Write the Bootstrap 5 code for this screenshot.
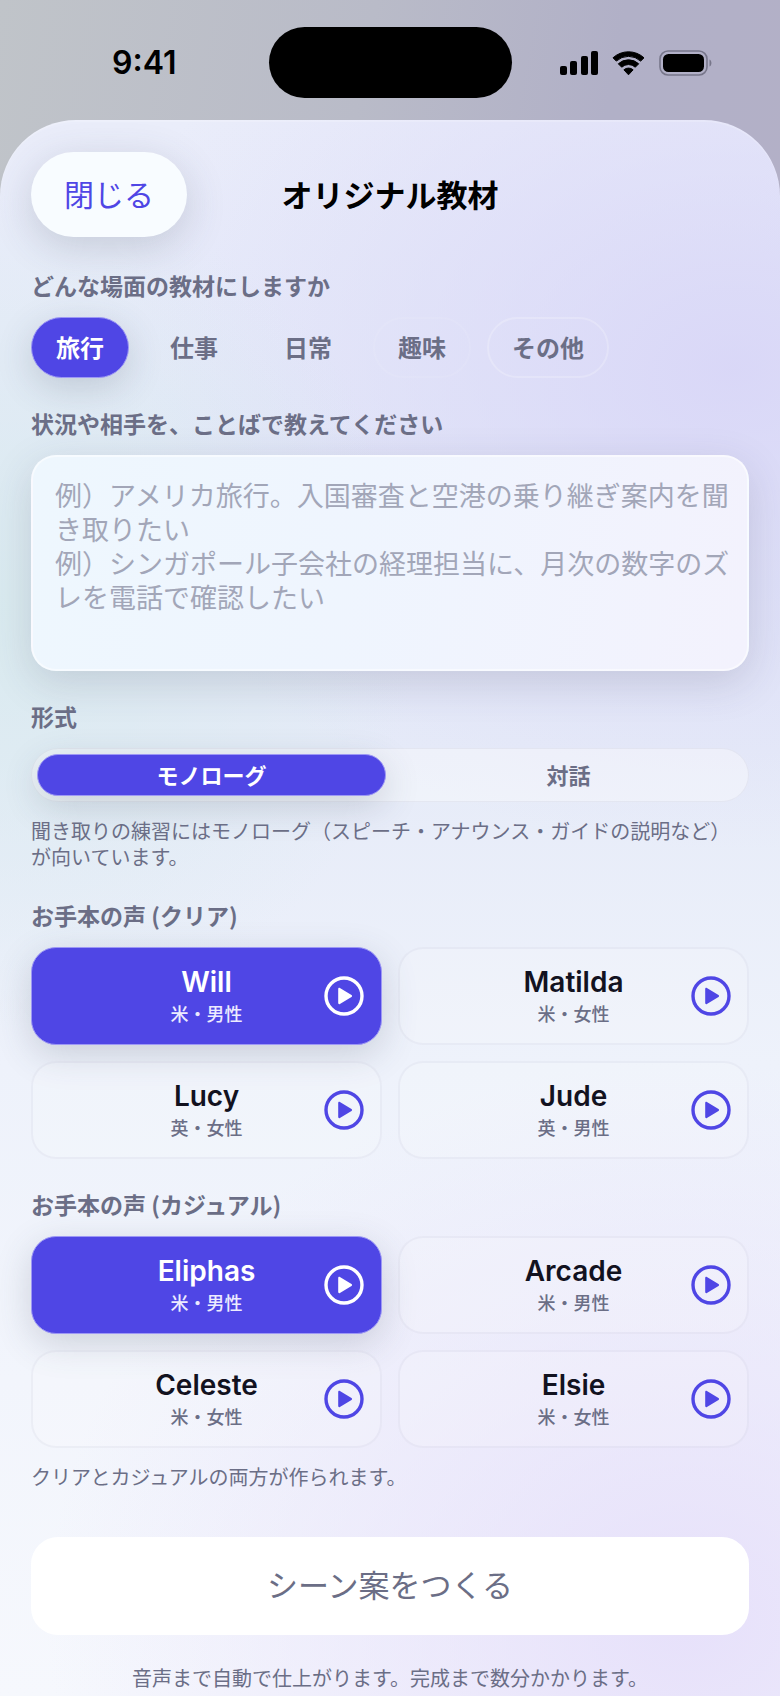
<!DOCTYPE html>
<html lang="ja">
<head>
<meta charset="utf-8">
<meta name="viewport" content="width=device-width, initial-scale=1">
<title>オリジナル教材</title>
<link href="https://cdn.jsdelivr.net/npm/bootstrap@5.3.0/dist/css/bootstrap.min.css" rel="stylesheet">
<style>
  :root { --accent: #4f46e5; --muted: #6b6e86; --ink: #12121f; }
  body {
    font-family: "Noto Sans CJK JP", sans-serif;
    color: var(--muted);
    background: linear-gradient(100deg, #c0c4c9 0%, #b9bbc8 45%, #b1b0c7 75%, #b3b0c7 100%) no-repeat #fff;
    background-size: 100% 320px;
  }
  .latin { font-family: Inter, "Liberation Sans", sans-serif; font-weight: 600; }
  .status-bar {
    display: grid; grid-template-columns: 1fr 243px 1fr;
    align-items: center; justify-items: center;
    padding: 27px 20px 22px; color: #000;
  }
  .clock { font-size: 32px; line-height: 36px; }
  .island { width: 100%; height: 71px; background: #000; border-radius: 36px; }
  .sheet {
    min-height: calc(100vh - 120px);
    padding: 32px 31px 5px;
    border-radius: 76px 76px 0 0;
    box-shadow: inset 0 2px 1px rgba(255,255,255,.2);
    background:
      radial-gradient(ellipse 420px 420px at 0 490px, rgba(216,235,238,.85), rgba(216,235,238,0)),
      radial-gradient(ellipse 640px 480px at 94% 250px, rgba(215,212,247,.85), rgba(215,212,247,0)),
      radial-gradient(ellipse 640px 560px at 88% 1500px, rgba(229,222,250,.9), rgba(229,222,250,0)),
      linear-gradient(180deg, #eaedfa 0%, #e3e9f8 30%, #e6ebf8 40%, #eef2fb 60%, #f6f8fd 100%);
  }
  .sheet-head { display: grid; grid-template-columns: 1fr auto 1fr; align-items: center; }
  .close-btn {
    width: 156px; height: 85px; padding: 0 0 4px; border: 0; border-radius: 43px;
    background: #f8fcff; color: var(--accent);
    font-size: 30px; line-height: 40px;
    box-shadow: 0 10px 40px rgba(60,70,90,.2);
  }
  .sheet-title { padding-bottom: 2px; font-size: 31px; line-height: 40px; font-weight: 600; color: #000; }
  .block { margin: 29px 0 0; padding: 0; border: 0; min-width: 0; }
  .block-label { display: block; float: none; width: auto; margin: 0 0 16px; padding: 0; font-size: 23px; line-height: 32px; font-weight: 600; color: var(--muted); }
  .head-gap { margin-top: 32px; }
  .chip {
    height: 61px; padding: 0 24px; border: 1px solid transparent; border-radius: 31px;
    font-size: 24px; line-height: 57px; font-weight: 600; cursor: pointer;
  }
  .chip-edge { border: 2px solid rgba(255,255,255,.22); padding: 0 23px; line-height: 55px; }
  .chip-edge-faint { border-color: rgba(255,255,255,.08); }
  .btn-check:checked + .pick { background: var(--accent); color: #fff; border: 1px solid #9d98f5; box-shadow: 0 10px 36px rgba(60,70,90,.2); }
  .btn-check:focus-visible + .pick { outline: 3px solid #a5a0f5; }
  .prompt-box {
    display: block; height: 216px; padding: 21px 14px 20px 22px; resize: none;
    border: 2px solid rgba(255,255,255,.5); border-radius: 25px;
    background: linear-gradient(100deg, #eef7fe 0%, #eff5fe 45%, #f3f2fd 100%);
    font-size: 27px; line-height: 34px; color: var(--ink);
    box-shadow: 0 12px 40px rgba(60,60,90,.17);
  }
  .prompt-box:focus { background: #f3f6fe; border-color: #a5a0f5; }
  .prompt-box::placeholder { color: #a2a6b8; opacity: 1; }
  .segments {
    display: grid; grid-template-columns: 1fr 1fr; gap: 8px; height: 54px; padding: 5px;
    border: 1px solid rgba(130,130,160,.1); border-radius: 27px; background: rgba(255,255,255,.36);
  }
  .segment {
    border: 1px solid transparent; border-radius: 21px; text-align: center;
    font-size: 22px; line-height: 38px; font-weight: 600; cursor: pointer;
  }
  .note { margin: 16px 0 0; font-size: 20px; line-height: 26px; }
  .voices { display: grid; grid-template-columns: 1fr 1fr; gap: 16px; }
  .voice-card {
    display: block; height: 98px; padding: 16px 0 0; text-align: center; cursor: pointer;
    border: 2px solid rgba(120,120,160,.07); border-radius: 25px; background: rgba(255,255,255,.16);
  }
  .btn-check:checked + .voice-card { padding: 17px 1px 0; }
  .voice-name { display: block; font-size: 28px; line-height: 34px; color: var(--ink); }
  .voice-kind { display: block; font-size: 18px; line-height: 28px; font-weight: 500; }
  .btn-check:checked + .voice-card .voice-name { color: #fff; }
  .btn-check:checked + .voice-card .voice-kind { color: #ecebff; }
  .play-btn { right: 18px; padding: 0; border: 0; background: none; color: var(--accent); line-height: 0; }
  .btn-check:checked ~ .play-btn { color: #fff; }
  .make-btn {
    height: 98px; margin-top: 47px; padding: 0 0 4px; border: 0; border-radius: 27px; background: #fff;
    color: var(--muted); font-size: 31px; line-height: 44px;
  }
  .foot-note { margin: 30px 0 0; font-size: 20px; line-height: 26px; text-align: center; }
</style>
</head>
<body>
<svg class="d-none" aria-hidden="true">
  <symbol id="play" viewBox="0 0 40 40">
    <circle cx="20" cy="20" r="18" fill="none" stroke="currentColor" stroke-width="3.4"/>
    <path d="M14.200 13v14c0 1 .9 1.500 1.700 1l11.600-7c.8-.5.8-1.500 0-2L15.900 12c-.8-.5-1.700 0-1.700 1z" fill="currentColor"/>
  </symbol>
</svg>

<header class="status-bar">
  <div class="clock latin">9:41</div>
  <div class="island"></div>
  <svg width="152" height="26" viewBox="0 0 152 26" role="img" aria-label="電波、Wi-Fi、バッテリー">
    <rect x="0" y="16" width="7" height="9" rx="2"/>
    <rect x="10" y="11" width="7" height="14" rx="2"/>
    <rect x="21" y="6" width="7" height="19" rx="2"/>
    <rect x="31" y="1" width="7" height="24" rx="2"/>
    <path d="M53 7.800a23 23 0 0 1 31 0l-3.300 3.300a18 18 0 0 0-24.400 0z" stroke="#000" stroke-width="1" stroke-linejoin="round"/>
    <path d="M58.300 13.800a15 15 0 0 1 20.400 0l-3.400 3.400a10 10 0 0 0-13.600 0z" stroke="#000" stroke-width="1" stroke-linejoin="round"/>
    <path d="M63.900 19.800a7 7 0 0 1 9.200 0l-4.600 5z" stroke="#000" stroke-width="1" stroke-linejoin="round"/>
    <rect x="100" y="1" width="47" height="24" rx="8" fill="none" stroke="#77768a" stroke-width="1.600"/>
    <rect x="103" y="4" width="41" height="18" rx="5.500"/>
    <path d="M149.500 9.500c2.600 1 2.600 6 0 7z" fill="#77768a"/>
  </svg>
</header>

<main class="sheet">
  <div class="sheet-head">
    <button type="button" class="close-btn">閉じる</button>
    <h1 class="sheet-title m-0">オリジナル教材</h1>
  </div>

  <fieldset class="block head-gap">
    <legend class="block-label">どんな場面の教材にしますか</legend>
    <div class="d-flex flex-wrap gap-3">
      <input class="btn-check" type="radio" name="scene" id="scene-travel" checked><label class="chip pick" for="scene-travel">旅行</label>
      <input class="btn-check" type="radio" name="scene" id="scene-work"><label class="chip pick" for="scene-work">仕事</label>
      <input class="btn-check" type="radio" name="scene" id="scene-daily"><label class="chip pick" for="scene-daily">日常</label>
      <input class="btn-check" type="radio" name="scene" id="scene-hobby"><label class="chip chip-edge chip-edge-faint pick" for="scene-hobby">趣味</label>
      <input class="btn-check" type="radio" name="scene" id="scene-other"><label class="chip chip-edge pick" for="scene-other">その他</label>
    </div>
  </fieldset>

  <div class="block">
    <label class="block-label" for="situation">状況や相手を、ことばで教えてください</label>
    <textarea class="prompt-box form-control" id="situation" placeholder="例）アメリカ旅行。入国審査と空港の乗り継ぎ案内を聞き取りたい&#10;例）シンガポール子会社の経理担当に、月次の数字のズレを電話で確認したい"></textarea>
  </div>

  <fieldset class="block">
    <legend class="block-label">形式</legend>
    <div class="segments">
      <input class="btn-check" type="radio" name="format" id="format-mono" checked><label class="segment pick" for="format-mono">モノローグ</label>
      <input class="btn-check" type="radio" name="format" id="format-talk"><label class="segment pick" for="format-talk">対話</label>
    </div>
    <p class="note">聞き取りの練習にはモノローグ（スピーチ・アナウンス・ガイドの説明など）が向いています。</p>
  </fieldset>

  <fieldset class="block">
    <legend class="block-label">お手本の声 (クリア)</legend>
    <div class="voices">
      <div class="position-relative">
        <input class="btn-check" type="radio" name="clear" id="will" checked>
        <label class="voice-card pick" for="will"><span class="voice-name latin">Will</span><span class="voice-kind">米・男性</span></label>
        <button type="button" class="play-btn position-absolute top-50 translate-middle-y" aria-label="Willを再生"><svg width="40" height="40"><use href="#play"/></svg></button>
      </div>
      <div class="position-relative">
        <input class="btn-check" type="radio" name="clear" id="matilda">
        <label class="voice-card pick" for="matilda"><span class="voice-name latin">Matilda</span><span class="voice-kind">米・女性</span></label>
        <button type="button" class="play-btn position-absolute top-50 translate-middle-y" aria-label="Matildaを再生"><svg width="40" height="40"><use href="#play"/></svg></button>
      </div>
      <div class="position-relative">
        <input class="btn-check" type="radio" name="clear" id="lucy">
        <label class="voice-card pick" for="lucy"><span class="voice-name latin">Lucy</span><span class="voice-kind">英・女性</span></label>
        <button type="button" class="play-btn position-absolute top-50 translate-middle-y" aria-label="Lucyを再生"><svg width="40" height="40"><use href="#play"/></svg></button>
      </div>
      <div class="position-relative">
        <input class="btn-check" type="radio" name="clear" id="jude">
        <label class="voice-card pick" for="jude"><span class="voice-name latin">Jude</span><span class="voice-kind">英・男性</span></label>
        <button type="button" class="play-btn position-absolute top-50 translate-middle-y" aria-label="Judeを再生"><svg width="40" height="40"><use href="#play"/></svg></button>
      </div>
    </div>
  </fieldset>

  <fieldset class="block">
    <legend class="block-label">お手本の声 (カジュアル)</legend>
    <div class="voices">
      <div class="position-relative">
        <input class="btn-check" type="radio" name="casual" id="eliphas" checked>
        <label class="voice-card pick" for="eliphas"><span class="voice-name latin">Eliphas</span><span class="voice-kind">米・男性</span></label>
        <button type="button" class="play-btn position-absolute top-50 translate-middle-y" aria-label="Eliphasを再生"><svg width="40" height="40"><use href="#play"/></svg></button>
      </div>
      <div class="position-relative">
        <input class="btn-check" type="radio" name="casual" id="arcade">
        <label class="voice-card pick" for="arcade"><span class="voice-name latin">Arcade</span><span class="voice-kind">米・男性</span></label>
        <button type="button" class="play-btn position-absolute top-50 translate-middle-y" aria-label="Arcadeを再生"><svg width="40" height="40"><use href="#play"/></svg></button>
      </div>
      <div class="position-relative">
        <input class="btn-check" type="radio" name="casual" id="celeste">
        <label class="voice-card pick" for="celeste"><span class="voice-name latin">Celeste</span><span class="voice-kind">米・女性</span></label>
        <button type="button" class="play-btn position-absolute top-50 translate-middle-y" aria-label="Celesteを再生"><svg width="40" height="40"><use href="#play"/></svg></button>
      </div>
      <div class="position-relative">
        <input class="btn-check" type="radio" name="casual" id="elsie">
        <label class="voice-card pick" for="elsie"><span class="voice-name latin">Elsie</span><span class="voice-kind">米・女性</span></label>
        <button type="button" class="play-btn position-absolute top-50 translate-middle-y" aria-label="Elsieを再生"><svg width="40" height="40"><use href="#play"/></svg></button>
      </div>
    </div>
    <p class="note">クリアとカジュアルの両方が作られます。</p>
  </fieldset>

  <button type="button" class="make-btn d-block w-100">シーン案をつくる</button>
  <p class="foot-note">音声まで自動で仕上がります。完成まで数分かかります。</p>
</main>
<script src="https://cdn.jsdelivr.net/npm/bootstrap@5.3.0/dist/js/bootstrap.bundle.min.js"></script>
</body>
</html>
